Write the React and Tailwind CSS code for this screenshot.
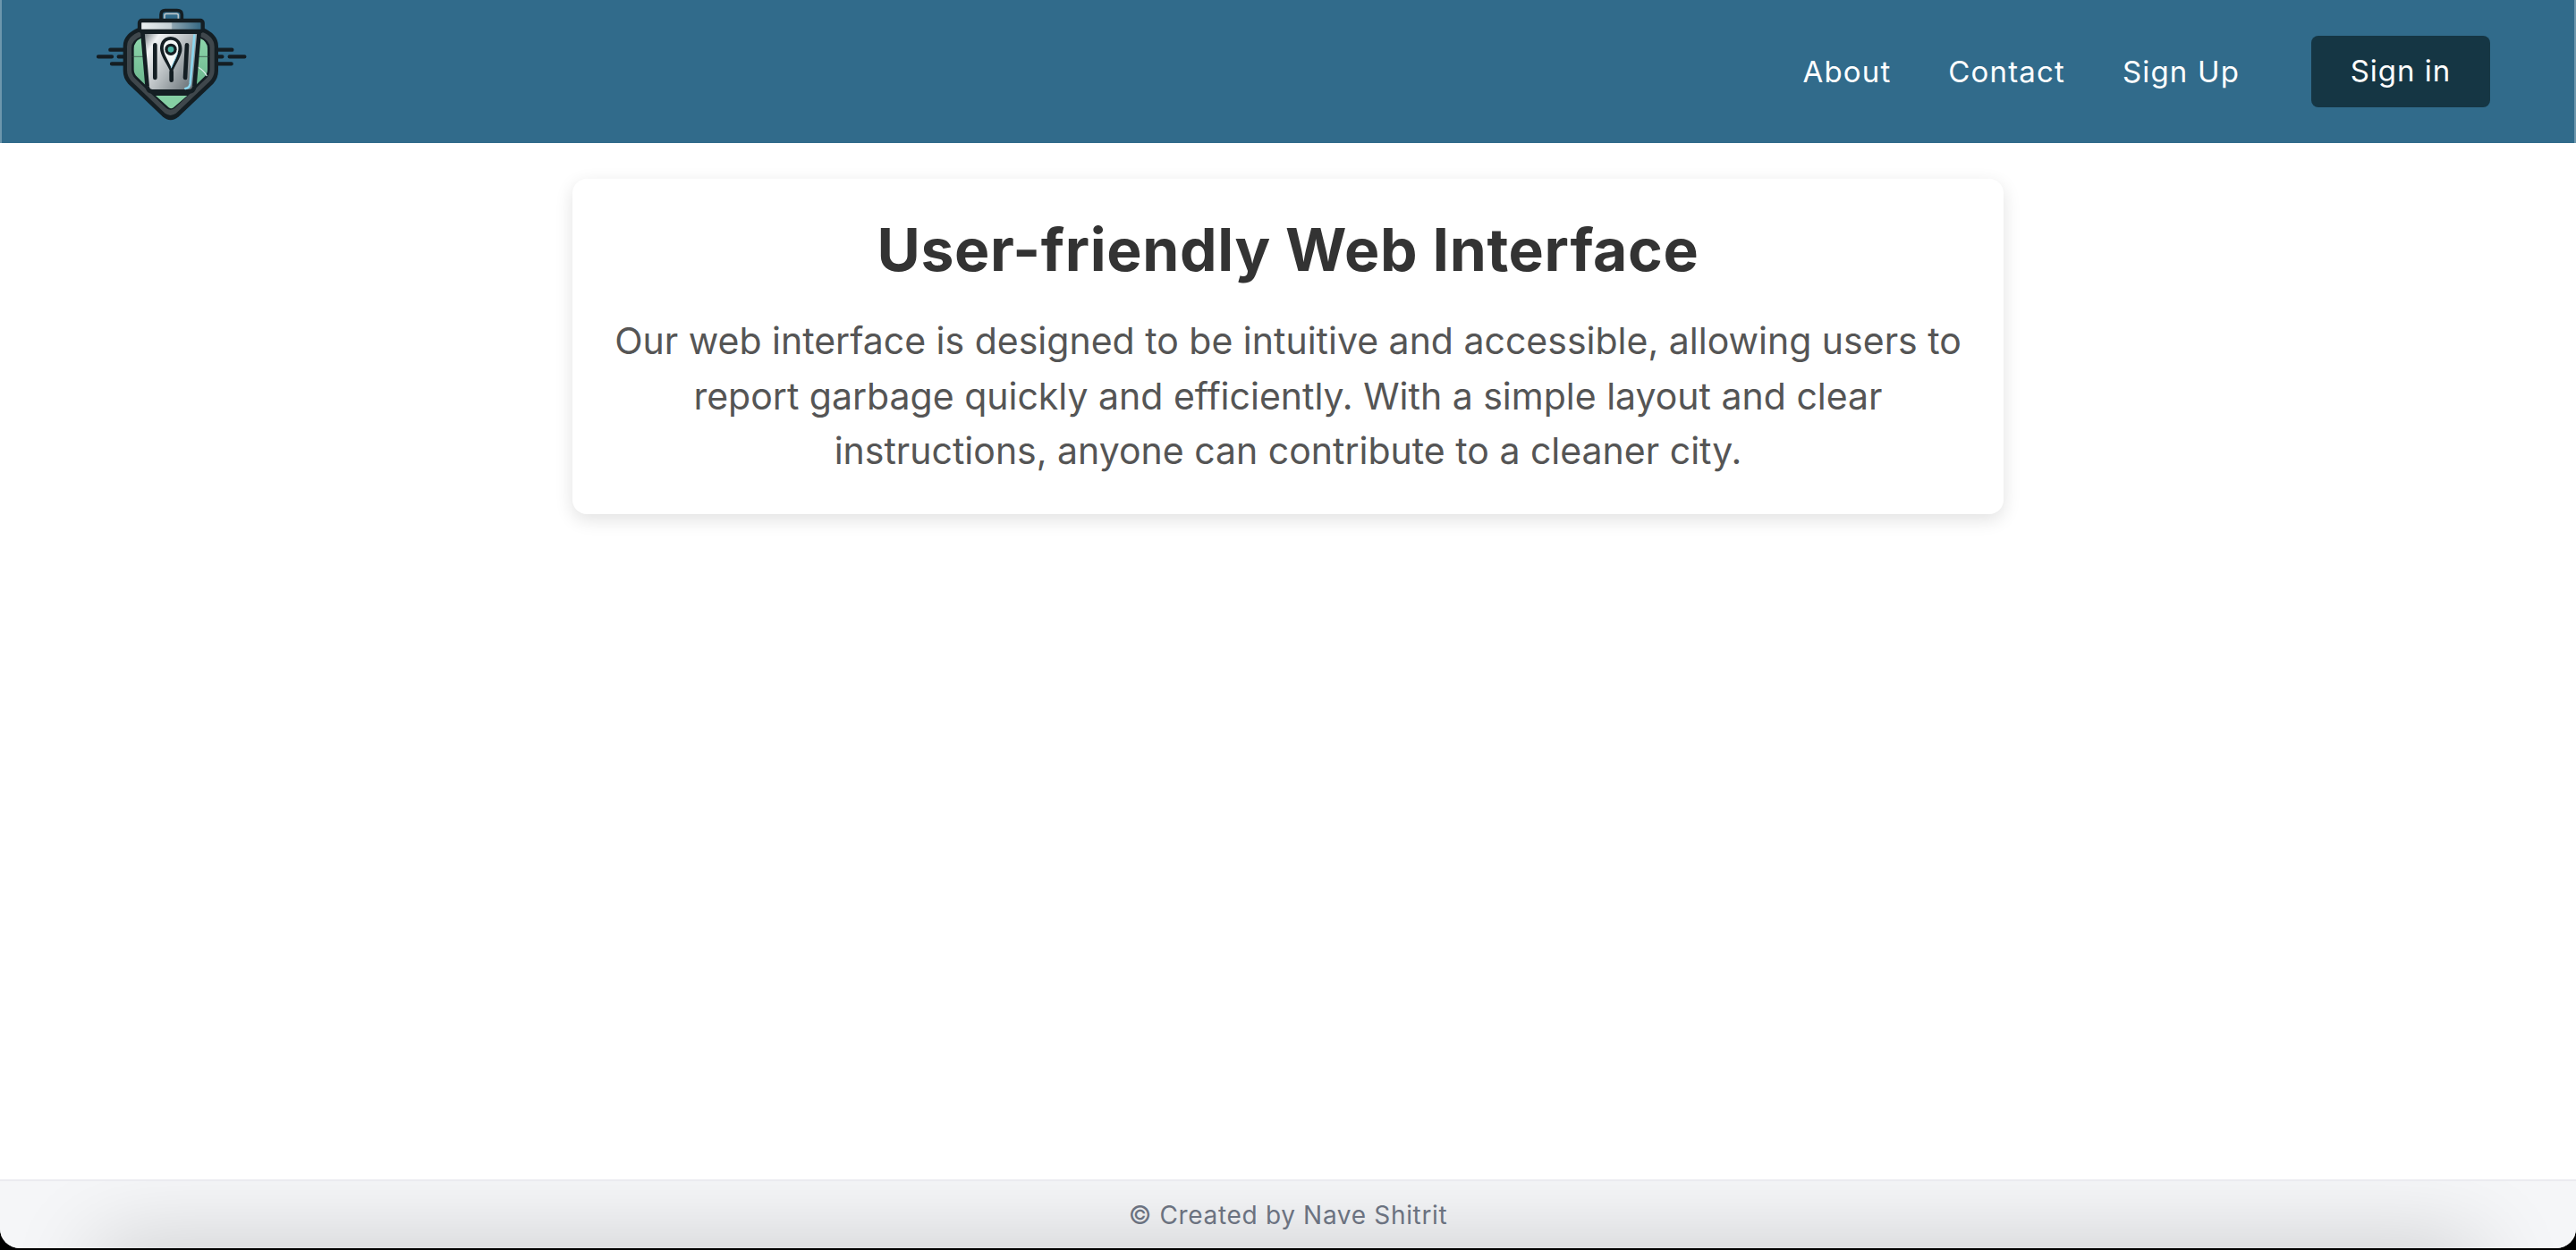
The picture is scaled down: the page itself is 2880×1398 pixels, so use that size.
const font = { fontFamily: 'Inter, "Liberation Sans", sans-serif' };

const Logo = () => (
  <svg viewBox="0 0 540 405" className="w-[180px] h-[135px] mt-[5px] self-start shrink-0 blur-[0.5px]">
    <defs>
      <linearGradient id="can" x1="0" y1="0" x2="1" y2="0.7">
        <stop offset="0" stopColor="#5e676c" />
        <stop offset="0.22" stopColor="#f1f3f4" />
        <stop offset="0.6" stopColor="#b4babd" />
        <stop offset="1" stopColor="#6b757a" />
      </linearGradient>
      <linearGradient id="lid" x1="0" y1="0" x2="1" y2="0">
        <stop offset="0" stopColor="#eef2f3" />
        <stop offset="0.5" stopColor="#c4d0d5" />
        <stop offset="0.52" stopColor="#8ea5b1" />
        <stop offset="1" stopColor="#2f6480" />
      </linearGradient>
      <linearGradient id="green" x1="0" y1="0" x2="0" y2="1">
        <stop offset="0" stopColor="#8ed5ab" />
        <stop offset="1" stopColor="#69b58c" />
      </linearGradient>
    </defs>
    <g stroke="#141e23" strokeWidth="13" strokeLinecap="round">
      <path d="M70 152H115M30 175H75M98 175H115M75 199H115" />
      <path d="M432 152H478M470 175H520M432 175H445M432 199H476" />
    </g>
    <path d="M170 76Q113 98 113 140V222Q113 248 130 266L245 376Q272 400 300 376L415 266Q432 248 432 222V140Q432 98 375 76Z" fill="#141e23" />
    <path d="M172 90Q126 106 126 142V220Q126 242 141 257L252 364Q272 380 292 364L404 257Q419 242 419 220V142Q419 106 372 90Z" fill="#3f474c" />
    <path d="M172 108Q141 120 141 146V218Q141 236 154 249L258 348Q272 358 286 348L391 249Q404 236 404 218V146Q404 120 372 108Z" fill="#141e23" />
    <path d="M176 112Q149 124 149 148V218Q149 233 160 243L200 282H345L385 243Q396 233 396 218V148Q396 124 368 112Z" fill="url(#green)" />
    <path d="M222 306H328L282 346Q274 352 266 346Z" fill="#86cfa4" />
    <path d="M142 175H190M360 175H404" stroke="#2c3d3a" strokeWidth="2" />
    <path d="M364 210Q384 222 394 240" stroke="#d8eee8" strokeWidth="4" fill="none" />
    <path d="M240 50V34Q240 20 254 20H294Q310 20 310 34V50" fill="none" stroke="#141e23" strokeWidth="11" />
    <path d="M252 50V36Q252 31 258 31H292Q298 31 298 36V50" fill="none" stroke="#b8c3c8" strokeWidth="5" />
    <path d="M178 92H368L352 276Q350 292 334 292H212Q196 292 194 276Z" fill="url(#can)" stroke="#141e23" strokeWidth="14" strokeLinejoin="round" />
    <path d="M352 104L338 266Q336 280 322 282" fill="none" stroke="#8ad6ee" strokeWidth="8" strokeLinecap="round" />
    <rect x="168" y="54" width="212" height="36" rx="8" fill="url(#lid)" stroke="#141e23" strokeWidth="13" />
    <path d="M220 136V246M327 136L321 246M275 225V254" stroke="#141e23" strokeWidth="14" strokeLinecap="round" fill="none" />
    <path d="M272 108C244 108 234 134 238 156C242 178 264 206 275 234C286 206 306 178 310 156C314 134 300 108 272 108Z" fill="#141e23" />
    <path d="M273 119C254 119 246 136 249 154C252 172 267 192 275 214C282 192 295 172 298 154C301 136 292 119 273 119Z" fill="#f4f7f7" />
    <path d="M298 158C295 175 283 194 275 214L272 214Z" fill="#8ad6ee" />
    <circle cx="273" cy="151" r="20" fill="#141e23" />
    <circle cx="273" cy="151" r="10" fill="#4fb5a6" />
  </svg>
);

const NavItem = ({ children }) => (
  <a className="text-[33px] leading-[48px] tracking-[0.035em] text-white">{children}</a>
);

const App = () => {
  return (
    <div style={font} className="h-screen flex flex-col bg-black">
      <div className="flex-1 flex flex-col bg-white rounded-b-[22px] mb-[2px] overflow-hidden">
        <header className="h-[160px] shrink-0 flex items-center bg-[#316b8b] border-x-2 border-[#6d97ad] pl-[98px] pr-[94px]">
          <Logo />
          <nav className="ml-auto flex items-center gap-[64px]">
            <NavItem>About</NavItem>
            <NavItem>Contact</NavItem>
            <NavItem>Sign Up</NavItem>
            <button className="ml-[16px] w-[200px] h-[80px] rounded-[8px] bg-[#153644] text-[33px] tracking-[0.03em] text-white">
              Sign in
            </button>
          </nav>
        </header>

        <main className="flex-1">
          <section className="w-[1600px] mx-auto mt-[40px] h-[375px] pt-[39px] rounded-[16px] bg-white shadow-[0_6px_20px_rgba(0,0,0,0.12)] text-center">
            <h1 className="text-[66px] leading-[80px] font-bold tracking-[0.01em] text-[#333333]">User-friendly Web Interface</h1>
            <p className="mt-[32px] px-[40px] text-[41px] leading-[61.5px] text-[#555555]">
              Our web interface is designed to be intuitive and accessible, allowing users to report garbage quickly and efficiently. With a simple layout and clear instructions, anyone can contribute to a cleaner city.
            </p>
          </section>
        </main>

        <footer className="relative h-[77px] shrink-0 overflow-hidden border-t-2 border-[#ebebf0] bg-[#f5f6f8] flex items-center justify-center">
          <div className="absolute left-[130px] right-[130px] -bottom-[50px] h-[30px] shadow-[0_0_100px_22px_rgba(0,0,0,0.2)]" />
          <span className="relative text-[28px] tracking-[0.024em] text-[#6b7280]">© Created by Nave Shitrit</span>
        </footer>
      </div>
    </div>
  );
};

export default App;
